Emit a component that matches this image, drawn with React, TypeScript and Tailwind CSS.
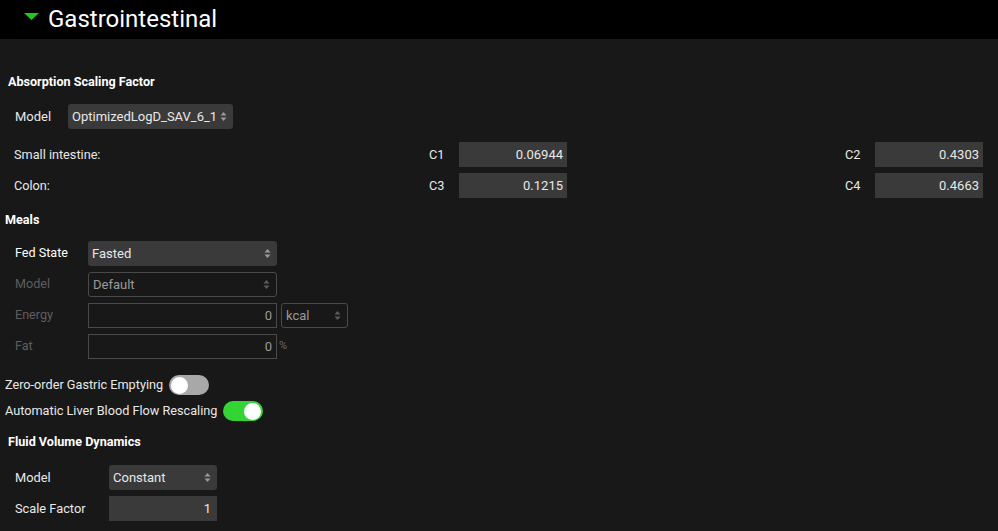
import React from "react";

function Arrows({ dim }: { dim?: boolean }) {
  return (
    <svg width="7" height="11" viewBox="0 0 7 11" className="shrink-0">
      <path d="M0.5 4.5 L3.5 1 L6.5 4.5 Z" fill={dim ? "#5c5c5c" : "#9a9a9a"} />
      <path d="M0.5 6.5 L3.5 10 L6.5 6.5 Z" fill={dim ? "#5c5c5c" : "#9a9a9a"} />
    </svg>
  );
}

function Select({ value, className, disabled }: { value: string; className: string; disabled?: boolean }) {
  return (
    <div
      className={
        "h-[25px] rounded-[3px] flex items-center justify-between pl-[4px] pr-[6px] text-[13px] " +
        (disabled ? "border border-[#4a4a4a] text-[#9a9a9a] " : "bg-[#3a3a3a] text-[#e8e8e8] ") +
        className
      }
    >
      <span>{value}</span>
      <Arrows dim={disabled} />
    </div>
  );
}

function NumInput({ value, className, disabled }: { value: string; className: string; disabled?: boolean }) {
  return (
    <div
      className={
        "h-[25px] flex items-center justify-end pr-[4px] text-[13px] " +
        (disabled ? "border border-[#4a4a4a] text-[#9a9a9a] " : "bg-[#3a3a3a] text-[#e8e8e8] ") +
        className
      }
    >
      {value}
    </div>
  );
}

function Toggle({ on }: { on: boolean }) {
  return (
    <div
      className={
        "w-[40px] h-[20px] rounded-full flex items-center px-[2px] " +
        (on ? "bg-[#33d433] justify-end" : "bg-[#a8a8a8] justify-start")
      }
    >
      <div className="w-[17px] h-[17px] rounded-full bg-white" />
    </div>
  );
}

function Heading({ children, className }: { children: React.ReactNode; className: string }) {
  return <div className={"h-[16px] leading-[16px] text-[12.6px] font-bold text-white " + className}>{children}</div>;
}

export default function App() {
  return (
    <div className="w-[998px] h-[531px] bg-[#181818] text-[#e8e8e8] font-['Roboto',sans-serif] overflow-hidden">
      {/* Header */}
      <div className="h-[39px] bg-black flex items-center pl-[24px]">
        <svg width="15" height="7" viewBox="0 0 15 7" className="mb-[6px]">
          <path d="M0 0 H15 L7.5 7 Z" fill="#22c522" />
        </svg>
        <span className="ml-[9px] text-[24px] text-white leading-none mb-[2px]">Gastrointestinal</span>
      </div>

      {/* Absorption Scaling Factor */}
      <Heading className="mt-[35px] pl-[8px]">Absorption Scaling Factor</Heading>
      <div className="mt-[14px] flex items-center pl-[15px]">
        <span className="w-[53px] text-[13px]">Model</span>
        <Select value="OptimizedLogD_SAV_6_1" className="w-[165px]" />
      </div>

      <div className="mt-[13px] flex items-center pl-[14px] text-[12.7px]">
        <span className="w-[415px]">Small intestine:</span>
        <span className="w-[30px]">C1</span>
        <NumInput value="0.06944" className="w-[108px]" />
        <span className="ml-[278px] w-[30px]">C2</span>
        <NumInput value="0.4303" className="w-[108px]" />
      </div>
      <div className="mt-[6px] flex items-center pl-[14px] text-[12.7px]">
        <span className="w-[415px]">Colon:</span>
        <span className="w-[30px]">C3</span>
        <NumInput value="0.1215" className="w-[108px]" />
        <span className="ml-[278px] w-[30px]">C4</span>
        <NumInput value="0.4663" className="w-[108px]" />
      </div>

      {/* Meals */}
      <Heading className="mt-[14px] pl-[5px]">Meals</Heading>
      <div className="mt-[13px] pl-[15px] flex flex-col gap-[6px] text-[12.6px]">
        <div className="flex items-center">
          <span className="w-[73px] text-white">Fed State</span>
          <Select value="Fasted" className="w-[189px]" />
        </div>
        <div className="flex items-center">
          <span className="w-[73px] text-[#5e5e5e]">Model</span>
          <Select value="Default" className="w-[189px]" disabled />
        </div>
        <div className="flex items-center">
          <span className="w-[73px] text-[#5e5e5e]">Energy</span>
          <NumInput value="0" className="w-[189px]" disabled />
          <Select value="kcal" className="ml-[4px] w-[67px] pl-[3px]" disabled />
        </div>
        <div className="flex items-center">
          <span className="w-[73px] text-[#5e5e5e]">Fat</span>
          <NumInput value="0" className="w-[189px]" disabled />
          <span className="ml-[2px] text-[11px] text-[#6a6a6a]">%</span>
        </div>
      </div>

      {/* Toggles */}
      <div className="mt-[16px] pl-[5px] flex flex-col gap-[6px] text-[12.7px]">
        <div className="flex items-center gap-[6px]">
          <span>Zero-order Gastric Emptying</span>
          <Toggle on={false} />
        </div>
        <div className="flex items-center gap-[6px]">
          <span>Automatic Liver Blood Flow Rescaling</span>
          <Toggle on={true} />
        </div>
      </div>

      {/* Fluid Volume Dynamics */}
      <Heading className="mt-[13px] pl-[8px]">Fluid Volume Dynamics</Heading>
      <div className="mt-[15px] pl-[15px] flex flex-col gap-[6px] text-[12.8px]">
        <div className="flex items-center">
          <span className="w-[94px]">Model</span>
          <Select value="Constant" className="w-[108px]" />
        </div>
        <div className="flex items-center">
          <span className="w-[94px]">Scale Factor</span>
          <NumInput value="1" className="w-[108px] pr-[6px]" />
        </div>
      </div>
    </div>
  );
}
